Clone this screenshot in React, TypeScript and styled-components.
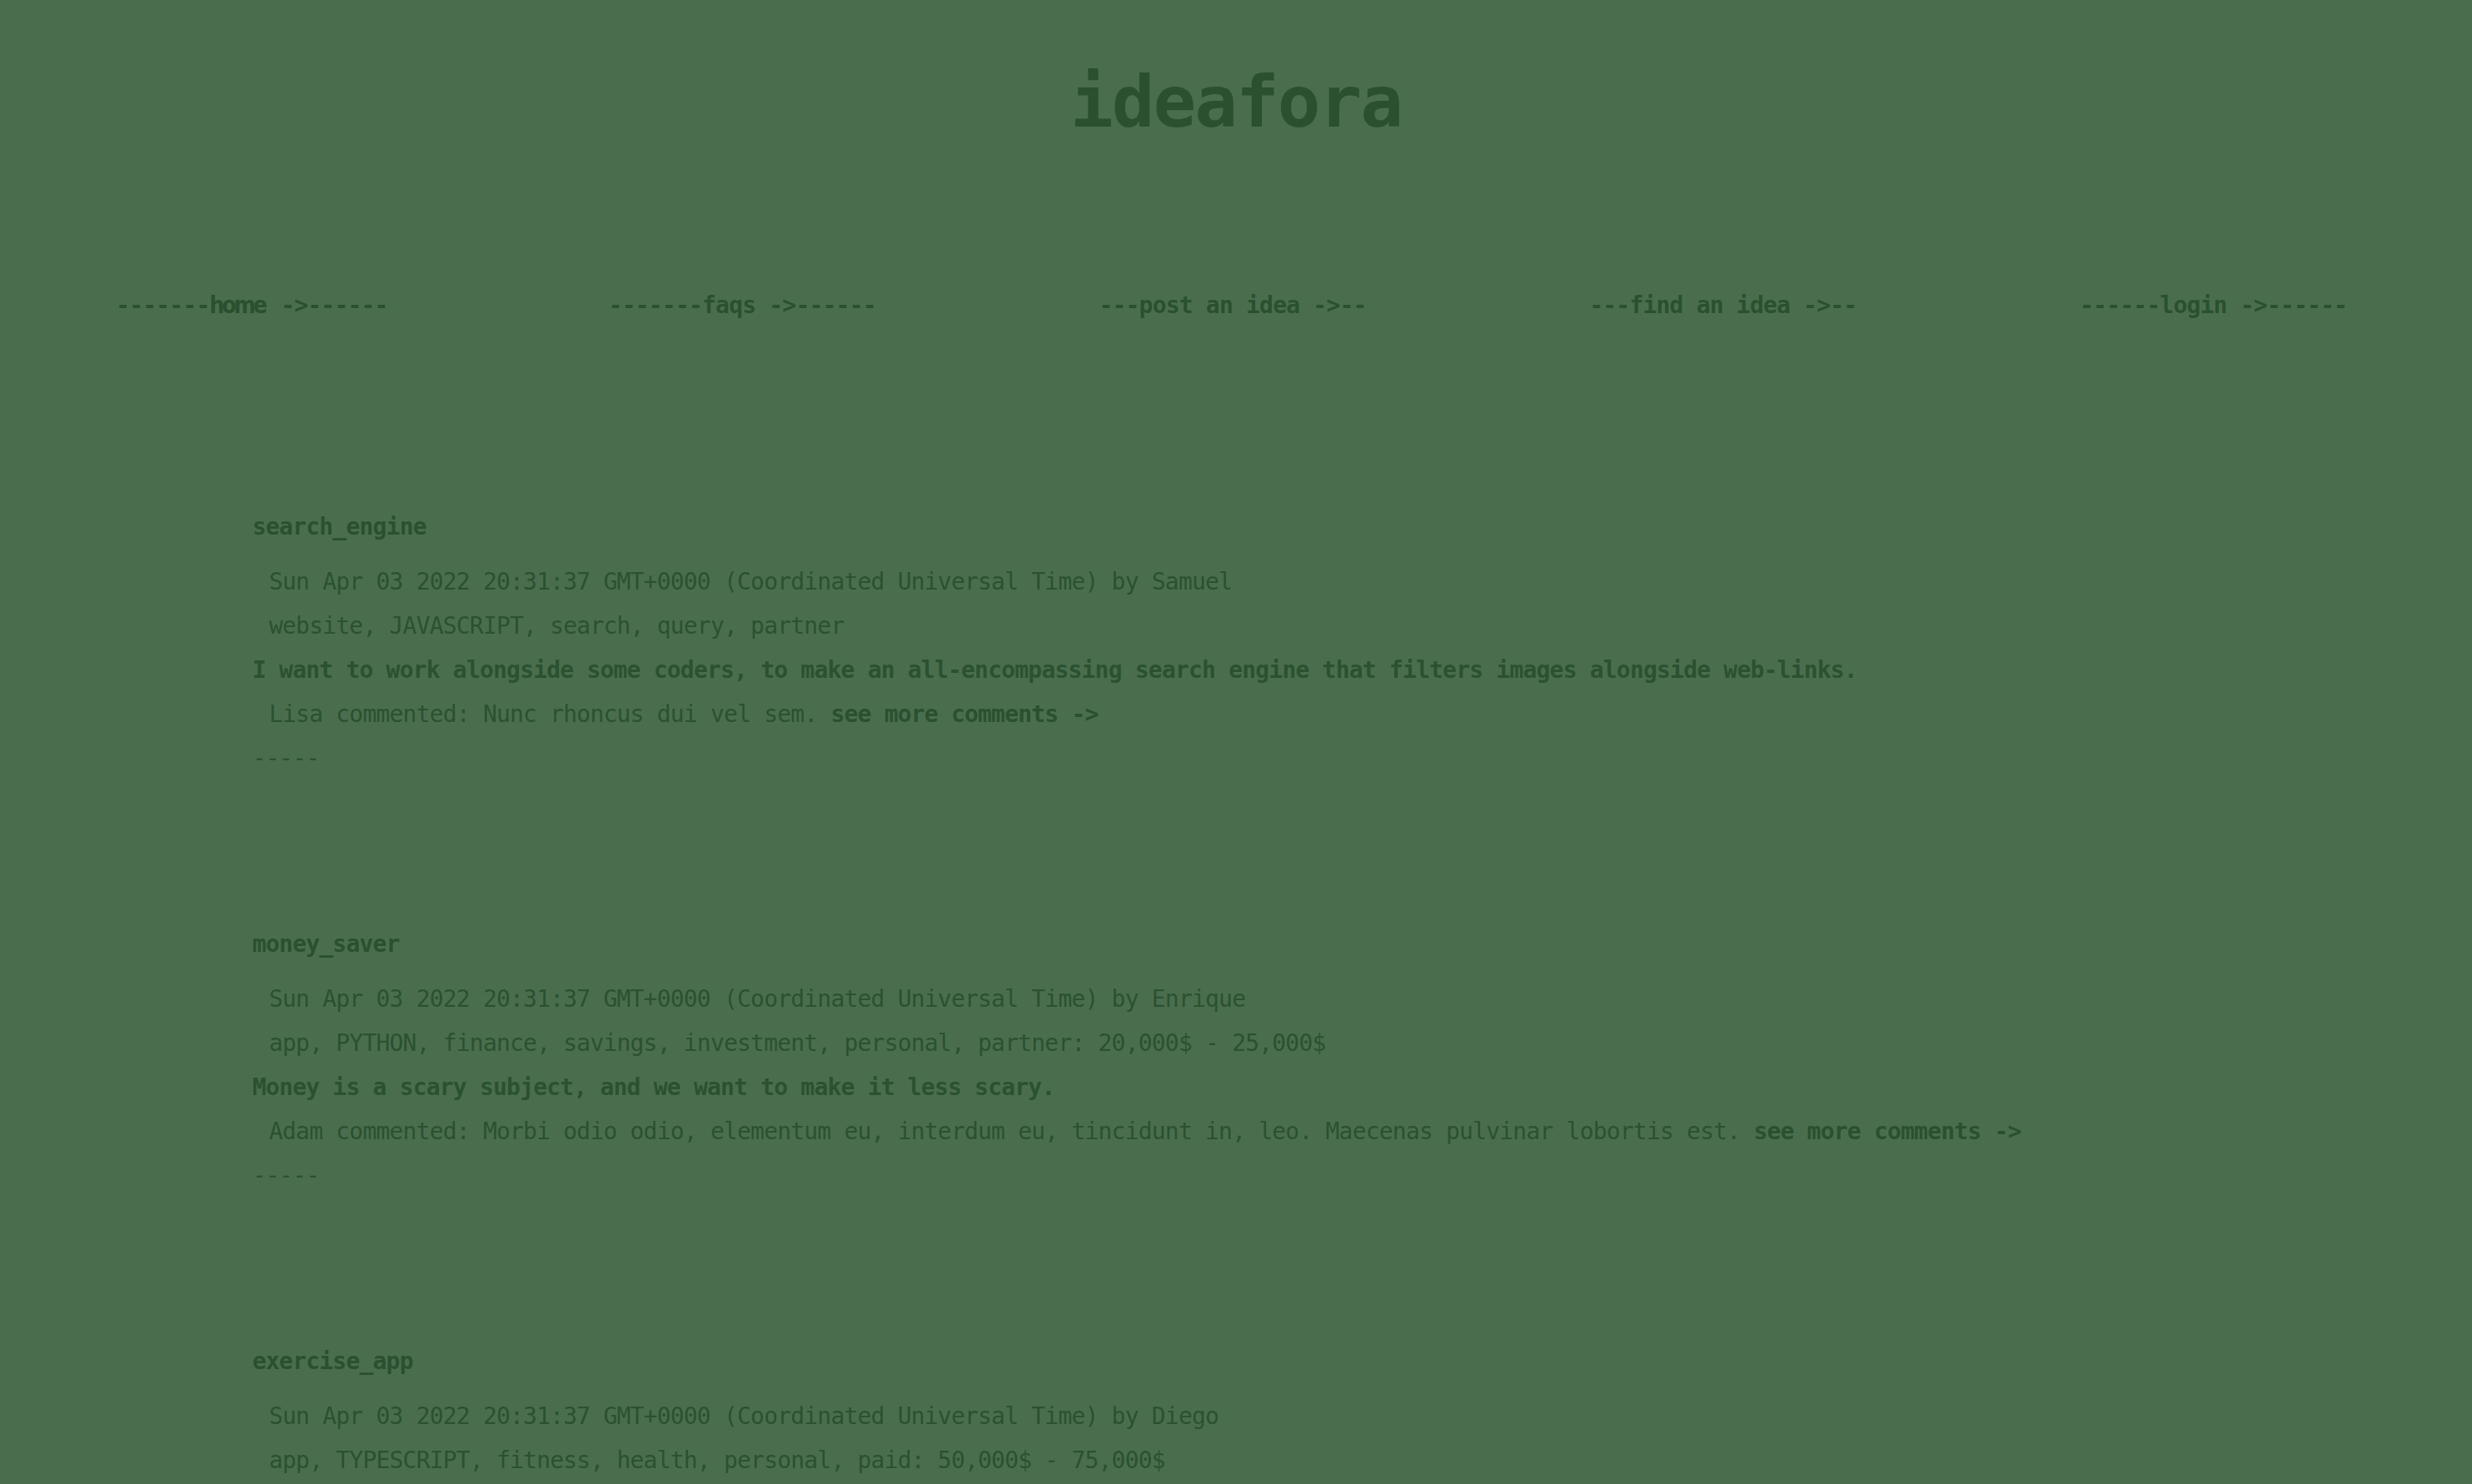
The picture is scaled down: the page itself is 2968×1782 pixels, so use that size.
import React from "react";
import styled, { createGlobalStyle } from "styled-components";

const GlobalStyle = createGlobalStyle`
  html, body {
    background: #4a6e4d;
  }
  body {
    margin: 8px;
    font-family: "DejaVu Sans Mono", "Liberation Mono", monospace;
    color: #2b5131;
  }
`;

const Page = styled.div`
  display: flex;
  flex-direction: column;
`;

const Logo = styled.h1`
  margin: 64px 0 0;
  text-align: center;
  font-size: 86px;
  line-height: 100px;
  font-weight: 700;
  letter-spacing: -2px;
  color: #2a5030;
`;

const Nav = styled.nav`
  display: flex;
  margin-top: 168px;
  padding-right: 8px;
`;

const NavItem = styled.a`
  flex: 1;
  text-align: center;
  font-size: 28px;
  letter-spacing: -0.8px;
  line-height: 53px;
  font-weight: 700;
  white-space: pre;
  color: #2a5030;
  text-decoration: none;
`;

const NarrowWord = styled.span`
  font-family: "Liberation Sans Narrow", "DejaVu Sans Condensed", sans-serif;
  font-size: 28px;
  letter-spacing: -3px;
  margin-right: 3px;
`;

const PostList = styled.main`
  display: flex;
  flex-direction: column;
  gap: 170px;
  margin-top: 213px;
  padding-left: 295px;
`;

const Post = styled.article`
  display: flex;
  flex-direction: column;
  font-size: 28px;
  letter-spacing: -0.8px;
  line-height: 53px;
`;

const PostTitle = styled.div`
  font-weight: 700;
  margin-bottom: 13px;
  color: #2a5030;
`;

const Line = styled.div<{ $bold?: boolean; $indent?: boolean }>`
  white-space: pre;
  font-weight: ${(p) => (p.$bold ? 700 : 400)};
  padding-left: ${(p) => (p.$indent ? "20px" : "0")};
`;

const MoreLink = styled.a`
  font-weight: 700;
  color: #2a5030;
  text-decoration: none;
`;

type PostData = {
  title: string;
  author: string;
  tags: string;
  description?: string;
  comment?: string;
};

const DATE = "Sun Apr 03 2022 20:31:37 GMT+0000 (Coordinated Universal Time)";

const posts: PostData[] = [
  {
    title: "search_engine",
    author: "Samuel",
    tags: "website, JAVASCRIPT, search, query, partner",
    description:
      "I want to work alongside some coders, to make an all-encompassing search engine that filters images alongside web-links.",
    comment: "Lisa commented: Nunc rhoncus dui vel sem.",
  },
  {
    title: "money_saver",
    author: "Enrique",
    tags: "app, PYTHON, finance, savings, investment, personal, partner: 20,000$ - 25,000$",
    description: "Money is a scary subject, and we want to make it less scary.",
    comment:
      "Adam commented: Morbi odio odio, elementum eu, interdum eu, tincidunt in, leo. Maecenas pulvinar lobortis est.",
  },
  {
    title: "exercise_app",
    author: "Diego",
    tags: "app, TYPESCRIPT, fitness, health, personal, paid: 50,000$ - 75,000$",
  },
];

export default function App() {
  return (
    <Page>
      <GlobalStyle />
      <Logo>ideafora</Logo>
      <Nav>
        <NavItem href="#">
          -------<NarrowWord>home</NarrowWord> -&gt;------
        </NavItem>
        <NavItem href="#">-------faqs -&gt;------</NavItem>
        <NavItem href="#">---post an idea -&gt;--</NavItem>
        <NavItem href="#">---find an idea -&gt;--</NavItem>
        <NavItem href="#">------login -&gt;------</NavItem>
      </Nav>
      <PostList>
        {posts.map((p) => (
          <Post key={p.title}>
            <PostTitle>{p.title}</PostTitle>
            <Line $indent>
              {DATE} by {p.author}
            </Line>
            <Line $indent>{p.tags}</Line>
            {p.description && <Line $bold>{p.description}</Line>}
            {p.comment && (
              <Line $indent>
                {p.comment} <MoreLink href="#">see more comments -&gt;</MoreLink>
              </Line>
            )}
            {p.description && <Line>-----</Line>}
          </Post>
        ))}
      </PostList>
    </Page>
  );
}
